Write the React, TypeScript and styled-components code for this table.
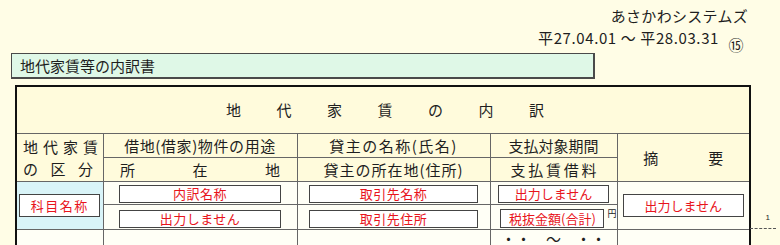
import React from "react";
import styled, { createGlobalStyle } from "styled-components";

const GlobalStyle = createGlobalStyle`
  html, body { margin: 0; padding: 0; }
  body {
    background: #fffde6;
    font-family: "Noto Sans CJK JP", "Noto Sans", sans-serif;
    color: #1e1e1e;
    overflow: hidden;
  }
`;

const Page = styled.div`
  width: 780px;
  height: 245px;
  overflow: hidden;
`;

const Heading = styled.header`
  display: flex;
  flex-direction: column;
  align-items: flex-end;
  padding: 6px 32px 0 0;
`;

const Company = styled.div`
  font-size: 15px;
  line-height: 20px;
  letter-spacing: 0.3px;
`;

const PeriodRow = styled.div`
  display: flex;
  height: 27px;
  margin-right: 4px;
`;

const Period = styled.div`
  align-self: flex-start;
  margin-top: 2px;
  font-size: 15px;
  line-height: 20px;
  letter-spacing: 0.6px;
`;

const Badge = styled.div`
  align-self: flex-end;
  width: 16px;
  margin: 0 0 0 9px;
  font-size: 15px;
  line-height: 16px;
  text-align: center;
`;

const TitleBar = styled.div`
  box-sizing: border-box;
  margin-left: 11px;
  width: 584px;
  height: 26px;
  padding-left: 8px;
  border: 1px solid #4a4a4a;
  border-width: 1px 2px 2px 1px;
  background: #dff8e7;
  font-size: 15px;
  line-height: 23px;
`;

const Sheet = styled.div`
  position: relative;
  margin: 6px 0 0 15px;
  width: 734px;
`;

const Grid = styled.table`
  border-collapse: collapse;
  table-layout: fixed;
  width: 734px;
  border: 2px solid #111;
`;

type Tone = "head" | "data" | "key";
const tones: Record<Tone, string> = {
  head: "#fffbdc",
  data: "#fffff6",
  key: "#d9f4f8",
};

const Cell = styled.td<{
  $h?: number;
  $tone?: Tone;
  $dashed?: boolean;
  $valign?: "middle" | "bottom" | "top";
  $pad?: string;
  $align?: "left" | "center";
}>`
  ${(p) => (p.$h ? `height: ${p.$h}px;` : "")}
  padding: ${(p) => p.$pad ?? "0"};
  border: 1px solid #666;
  ${(p) => (p.$dashed ? "border-bottom: 1px dashed #444;" : "")}
  background: ${(p) => tones[p.$tone ?? "head"]};
  vertical-align: ${(p) => p.$valign ?? "middle"};
  text-align: ${(p) => p.$align ?? "center"};
  font-size: 15px;
  line-height: 20px;
  white-space: nowrap;
  overflow: hidden;
`;

const SpreadBox = styled.span<{ $w: number }>`
  display: inline-flex;
  justify-content: space-between;
  width: ${(p) => p.$w}px;
  vertical-align: top;
`;

const Spread = ({ text, w }: { text: string; w: number }) => (
  <SpreadBox $w={w}>
    {Array.from(text).map((c, i) => (
      <span key={i}>{c}</span>
    ))}
  </SpreadBox>
);

const Line = styled.div`
  line-height: 22px;
`;

const Caption = styled.span<{ $ls?: number }>`
  letter-spacing: ${(p) => p.$ls ?? 0}px;
`;

const Field = styled.div<{ $w: number; $h: number; $ls?: number }>`
  box-sizing: border-box;
  width: ${(p) => p.$w}px;
  height: ${(p) => p.$h}px;
  margin: 0 auto;
  border: 1px solid #444;
  background: #ffffff;
  color: #e8141c;
  font-size: 13px;
  line-height: ${(p) => p.$h - 2}px;
  letter-spacing: ${(p) => p.$ls ?? 0}px;
  text-align: center;
`;

const AmountRow = styled.div`
  display: flex;
  align-items: flex-start;
  padding-left: 8px;
`;

const Yen = styled.span`
  margin-left: 1px;
  font-size: 9px;
  line-height: 10px;
`;

const DateDots = styled.div`
  display: flex;
  justify-content: center;
  gap: 15px;
  font-size: 15px;
  line-height: 14px;
`;

const RowMarker = styled.div`
  position: absolute;
  left: 735px;
  top: 128px;
  width: 20px;
  height: 15px;
  padding-right: 6px;
  border-bottom: 1px dashed #555;
  font-size: 8px;
  line-height: 10px;
  text-align: right;
  font-family: "Liberation Sans", sans-serif;
`;

export default function App() {
  return (
    <Page>
      <GlobalStyle />
      <Heading>
        <Company>あさかわシステムズ</Company>
        <PeriodRow>
          <Period>平27.04.01 ～ 平28.03.31</Period>
          <Badge>⑮</Badge>
        </PeriodRow>
      </Heading>
      <TitleBar>地代家賃等の内訳書</TitleBar>
      <Sheet>
        <Grid>
          <colgroup>
            <col style={{ width: 87 }} />
            <col style={{ width: 194 }} />
            <col style={{ width: 193 }} />
            <col style={{ width: 127 }} />
            <col style={{ width: 133 }} />
          </colgroup>
          <tbody>
            <tr>
              <Cell colSpan={5} $h={46} $pad="0 0 0 4px">
                <Spread text="地代家賃の内訳" w={318} />
              </Cell>
            </tr>
            <tr>
              <Cell rowSpan={2} $align="left" $pad="0 0 0 6px">
                <Line>
                  <Spread text="地代家賃" w={75} />
                </Line>
                <Line>
                  <Spread text="の区分" w={70} />
                </Line>
              </Cell>
              <Cell $h={23} $dashed>
                <Caption $ls={0.6}>借地(借家)物件の用途</Caption>
              </Cell>
              <Cell $dashed>
                <Caption $ls={1.5}>貸主の名称(氏名)</Caption>
              </Cell>
              <Cell $dashed>支払対象期間</Cell>
              <Cell rowSpan={2}>
                <Spread text="摘要" w={80} />
              </Cell>
            </tr>
            <tr>
              <Cell $h={23}>
                <Spread text="所在地" w={160} />
              </Cell>
              <Cell>
                <Caption $ls={1}>貸主の所在地(住所)</Caption>
              </Cell>
              <Cell>
                <Spread text="支払賃借料" w={86} />
              </Cell>
            </tr>
            <tr>
              <Cell rowSpan={2} $tone="key">
                <Field $w={81} $h={23} $ls={1.5}>
                  科目名称
                </Field>
              </Cell>
              <Cell $h={21} $tone="data" $dashed $valign="bottom" $pad="0 0 1px 0">
                <Field $w={162} $h={18} $ls={0.5}>
                  内訳名称
                </Field>
              </Cell>
              <Cell $tone="data" $dashed $valign="bottom" $pad="0 0 1px 0">
                <Field $w={169} $h={18} $ls={0.5}>
                  取引先名称
                </Field>
              </Cell>
              <Cell $tone="data" $dashed $valign="bottom" $pad="0 0 1px 0">
                <Field $w={111} $h={18}>
                  出力しません
                </Field>
              </Cell>
              <Cell rowSpan={2} $tone="data">
                <Field $w={121} $h={23}>
                  出力しません
                </Field>
              </Cell>
            </tr>
            <tr>
              <Cell $h={23} $tone="data" $valign="bottom" $pad="0 0 1px 0">
                <Field $w={162} $h={18} $ls={0.5}>
                  出力しません
                </Field>
              </Cell>
              <Cell $tone="data" $valign="bottom" $pad="0 0 1px 0">
                <Field $w={169} $h={18} $ls={0.5}>
                  取引先住所
                </Field>
              </Cell>
              <Cell $tone="data" $valign="bottom" $pad="0 0 1px 0">
                <AmountRow>
                  <Field $w={104} $h={19}>
                    税抜金額(合計)
                  </Field>
                  <Yen>円</Yen>
                </AmountRow>
              </Cell>
            </tr>
            <tr>
              <Cell $h={40} $tone="data" />
              <Cell $tone="data" />
              <Cell $tone="data" />
              <Cell $tone="data" $valign="top" $pad="2px 0 0 0">
                <DateDots>
                  <span>・・</span>
                  <span>～</span>
                  <span>・・</span>
                </DateDots>
              </Cell>
              <Cell $tone="data" />
            </tr>
          </tbody>
        </Grid>
        <RowMarker>1</RowMarker>
      </Sheet>
    </Page>
  );
}
